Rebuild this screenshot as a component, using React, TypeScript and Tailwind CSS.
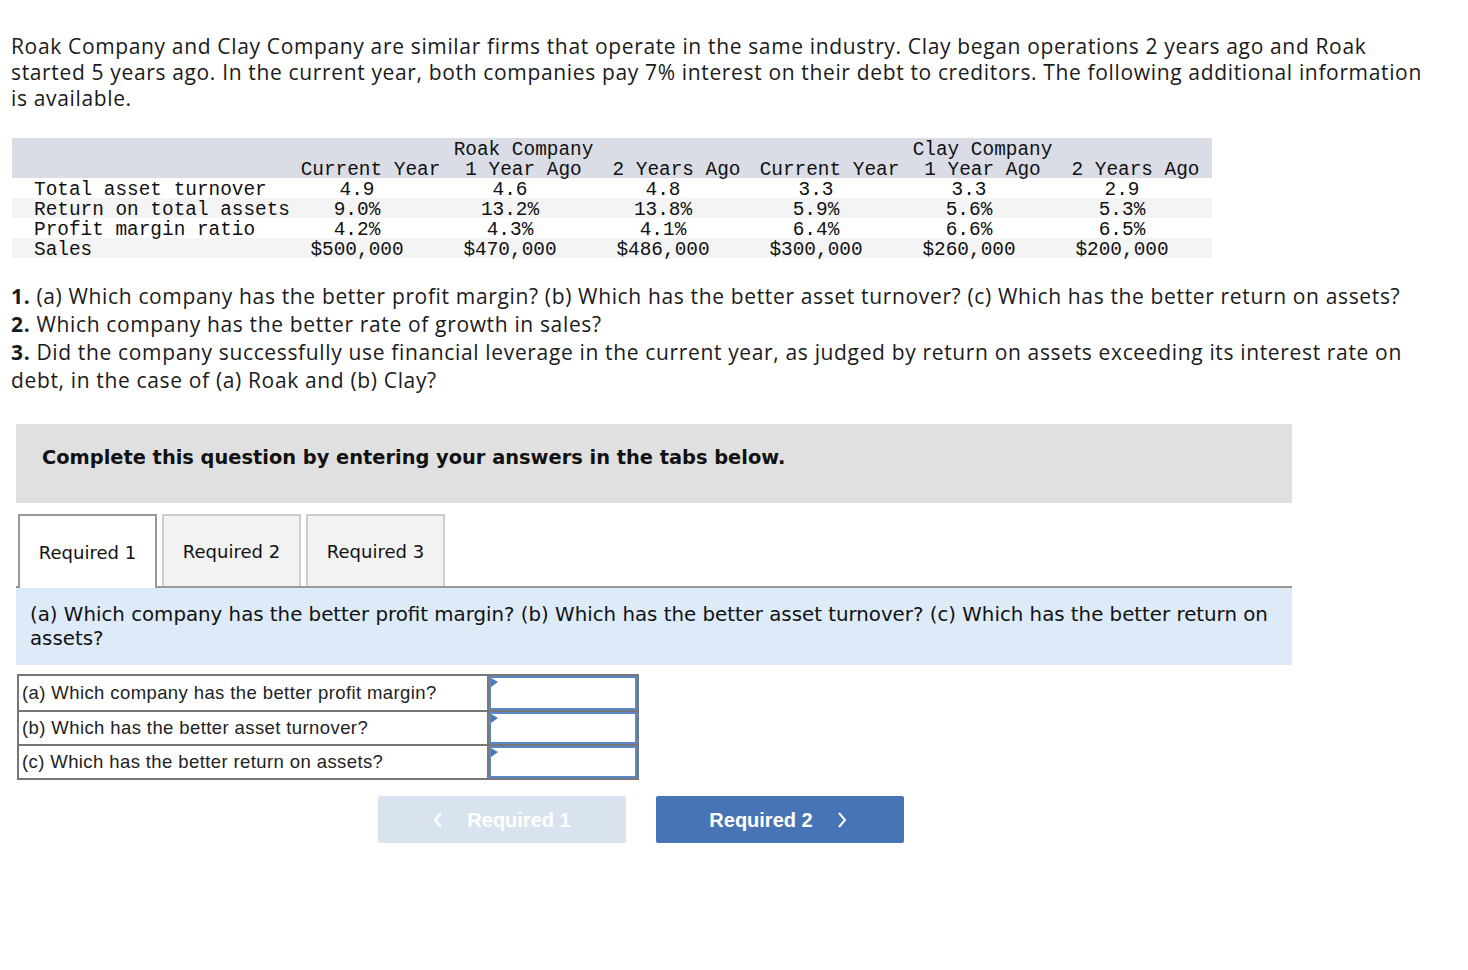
import React from "react";

const rows = [
  { label: "Total asset turnover", values: ["4.9", "4.6", "4.8", "3.3", "3.3", "2.9"] },
  { label: "Return on total assets", values: ["9.0%", "13.2%", "13.8%", "5.9%", "5.6%", "5.3%"] },
  { label: "Profit margin ratio", values: ["4.2%", "4.3%", "4.1%", "6.4%", "6.6%", "6.5%"] },
  { label: "Sales", values: ["$500,000", "$470,000", "$486,000", "$300,000", "$260,000", "$200,000"] },
];

const periods = ["Current Year", "1 Year Ago", "2 Years Ago", "Current Year", "1 Year Ago", "2 Years Ago"];

const answers = [
  "(a) Which company has the better profit margin?",
  "(b) Which has the better asset turnover?",
  "(c) Which has the better return on assets?",
];

const DataTable = () => (
  <div className="ml-[12px] w-[1200px] font-['Liberation_Mono',monospace] text-[19.4px] leading-[20px] text-[#111]">
    <div className="grid grid-cols-[282px_459px_459px] bg-[#dadde5] pt-[2px] h-[20px]">
      <div />
      <div className="text-center">Roak Company</div>
      <div className="text-center">Clay Company</div>
    </div>
    <div className="grid grid-cols-[282px_repeat(6,153px)] bg-[#dadde5] pt-[2px] h-[20px]">
      <div />
      {periods.map((p, i) => (
        <div key={i} className="text-center whitespace-nowrap">{p}</div>
      ))}
    </div>
    {rows.map((r, i) => (
      <div
        key={r.label}
        className={`grid grid-cols-[282px_repeat(6,153px)] pt-[2px] h-[20px] ${i % 2 === 1 ? "bg-[#f4f4f4]" : "bg-white"}`}
      >
        <div className="pl-[22px] whitespace-nowrap">{r.label}</div>
        {r.values.map((v, j) => (
          <div key={j} className="text-center pr-[27px] whitespace-nowrap">{v}</div>
        ))}
      </div>
    ))}
  </div>
);

const Tabs = () => (
  <div className="ml-[16px] w-[1276px] flex items-end gap-[5px] pl-[2px] border-b-2 border-[#999] mt-[11px]">
    <div className="w-[139px] h-[74px] -mb-[2px] bg-white border-2 border-b-0 border-[#999] flex items-center justify-center">
      Required 1
    </div>
    <div className="w-[139px] h-[72px] bg-[#f2f2f2] border-2 border-b-0 border-[#ccc] flex items-center justify-center">
      Required 2
    </div>
    <div className="w-[139px] h-[72px] bg-[#f2f2f2] border-2 border-b-0 border-[#ccc] flex items-center justify-center">
      Required 3
    </div>
  </div>
);

const AnswerTable = () => (
  <div className="ml-[17px] mt-[9px] w-[622px] border-2 border-[#777] font-['Liberation_Sans',Arial,sans-serif] text-[18.5px] tracking-[0.4px] text-[#222]">
    {answers.map((a, i) => (
      <div key={a} className={`flex h-[34px] ${i > 0 ? "border-t-2 border-[#777]" : ""}`}>
        <div className="w-[470px] border-r-2 border-[#777] pl-[3px] flex items-center whitespace-nowrap">{a}</div>
        <div className="flex-1 border-2 border-[#5b87c5] bg-white relative">
          <svg className="absolute left-0 top-0" width="8" height="10" viewBox="0 0 8 10">
            <polygon points="0,0 7,4 0,9" fill="#4a78b8" />
          </svg>
        </div>
      </div>
    ))}
  </div>
);

export default function App() {
  return (
    <div className="bg-white w-[1468px] min-h-[970px] pt-[33px] text-[#1a1a1a]">
      <p className="pl-[11px] font-['Open_Sans',sans-serif] text-[21px] leading-[26px] tracking-[0.65px]">
        Roak Company and Clay Company are similar firms that operate in the same industry. Clay began operations 2 years ago and Roak
        <br />
        started 5 years ago. In the current year, both companies pay 7% interest on their debt to creditors. The following additional information
        <br />
        is available.
      </p>

      <div className="mt-[27px]">
        <DataTable />
      </div>

      <div className="mt-[24px] pl-[11px] font-['Open_Sans',sans-serif] text-[21px] leading-[28px] tracking-[0.65px]">
        <p className="whitespace-nowrap">
          <strong>1.</strong> (a) Which company has the better profit margin? (b) Which has the better asset turnover? (c) Which has the better return on assets?
        </p>
        <p>
          <strong>2.</strong> Which company has the better rate of growth in sales?
        </p>
        <p>
          <strong>3.</strong> Did the company successfully use financial leverage in the current year, as judged by return on assets exceeding its interest rate on
          <br />
          debt, in the case of (a) Roak and (b) Clay?
        </p>
      </div>

      <div className="font-['DejaVu_Sans',Verdana,sans-serif] text-[18px] text-[#111]">
        <div className="ml-[16px] mt-[30px] w-[1276px] h-[79px] bg-[#e0e0e0] pl-[26px] pt-[19px]">
          <p className="font-bold text-[19.4px]">Complete this question by entering your answers in the tabs below.</p>
        </div>

        <Tabs />

        <div className="ml-[16px] w-[1276px] h-[77px] bg-[#ddebf8] px-[14px] pt-[15px] leading-[24px] text-[19.8px]">
          (a) Which company has the better profit margin? (b) Which has the better asset turnover? (c) Which has the better return on
          <br />
          assets?
        </div>
      </div>

      <AnswerTable />

      <div className="flex gap-[30px] ml-[378px] mt-[16px] font-['Liberation_Sans',Arial,sans-serif] font-bold text-[20px] text-white">
        <button className="w-[248px] h-[47px] rounded-[2px] bg-[#d9e3f0] flex items-center justify-center gap-[24px]">
          <svg width="10" height="18" viewBox="0 0 10 18">
            <polyline points="8,2 2,9 8,16" fill="none" stroke="white" strokeWidth="2" />
          </svg>
          <span>Required 1</span>
        </button>
        <button className="w-[248px] h-[47px] rounded-[2px] bg-[#4674b5] flex items-center justify-center gap-[24px] pr-[4px]">
          <span>Required 2</span>
          <svg width="10" height="18" viewBox="0 0 10 18">
            <polyline points="2,2 8,9 2,16" fill="none" stroke="white" strokeWidth="2" />
          </svg>
        </button>
      </div>
    </div>
  );
}
